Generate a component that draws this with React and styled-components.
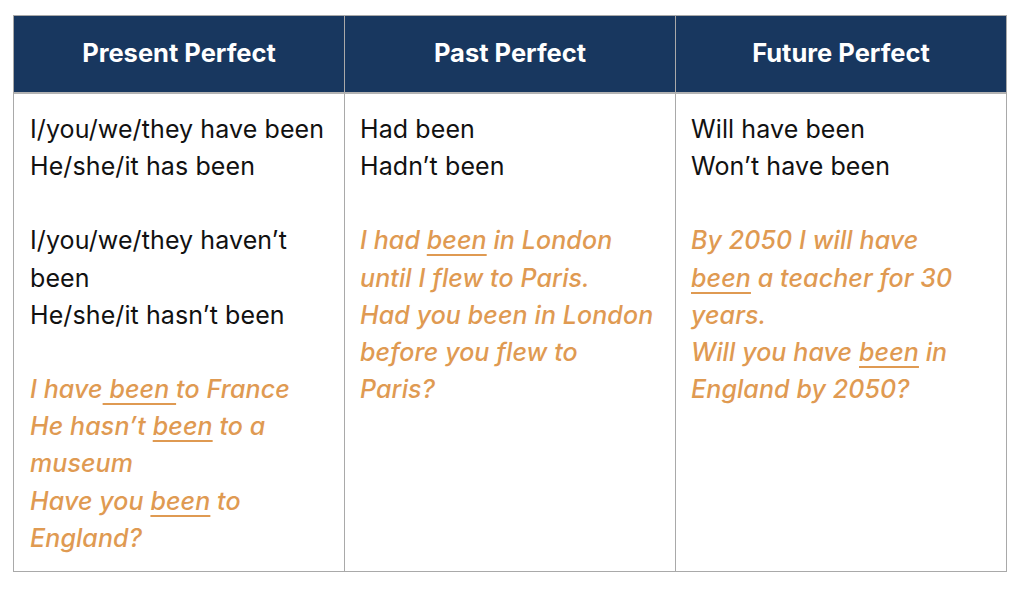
import styled, { createGlobalStyle } from 'styled-components';

const GlobalStyle = createGlobalStyle`
  html, body {
    margin: 0;
    padding: 0;
    background: #ffffff;
  }
  body {
    font-family: Inter, "Noto Sans", sans-serif;
  }
`;

const columns = [
  {
    title: 'Present Perfect',
    blocks: [
      { kind: 'form', lines: [['I/you/we/they have been'], ['He/she/it has been']] },
      { kind: 'form', lines: [['I/you/we/they haven’t'], ['been'], ['He/she/it hasn’t been']] },
      {
        kind: 'example',
        lines: [
          ['I have', { u: ' been ' }, 'to France'],
          ['He hasn’t ', { u: 'been' }, ' to a'],
          ['museum'],
          ['Have you ', { u: 'been' }, ' to'],
          ['England?'],
        ],
      },
    ],
  },
  {
    title: 'Past Perfect',
    blocks: [
      { kind: 'form', lines: [['Had been'], ['Hadn’t been']] },
      {
        kind: 'example',
        lines: [
          ['I had ', { u: 'been' }, ' in London'],
          ['until I flew to Paris.'],
          ['Had you been in London'],
          ['before you flew to'],
          ['Paris?'],
        ],
      },
    ],
  },
  {
    title: 'Future Perfect',
    blocks: [
      { kind: 'form', lines: [['Will have been'], ['Won’t have been']] },
      {
        kind: 'example',
        lines: [
          ['By 2050 I will have'],
          [{ u: 'been' }, ' a teacher for 30'],
          ['years.'],
          ['Will you have ', { u: 'been' }, ' in'],
          ['England by 2050?'],
        ],
      },
    ],
  },
];

export default function App() {
  return (
    <>
      <GlobalStyle />
      <Page>
        <Table>
          {columns.map((col) => (
            <HeadCell key={col.title}>{col.title}</HeadCell>
          ))}
          {columns.map((col) => (
            <BodyCell key={col.title}>
              {col.blocks.map((block, i) => (
                <Block key={i} $example={block.kind === 'example'}>
                  {block.lines.map((line, j) => (
                    <Line key={j}>
                      {line.map((part, k) =>
                        typeof part === 'string' ? (
                          <span key={k}>{part}</span>
                        ) : (
                          <Under key={k}>{part.u}</Under>
                        )
                      )}
                    </Line>
                  ))}
                </Block>
              ))}
            </BodyCell>
          ))}
        </Table>
      </Page>
    </>
  );
}

const Page = styled.div`
  padding: 15px 0 0 13px;
  width: 1024px;
  height: 591px;
  box-sizing: border-box;
`;

const Table = styled.div`
  width: 994px;
  display: grid;
  grid-template-columns: 330px 331px 331px;
  border: 1px solid #a9a9a9;
  box-sizing: border-box;
`;

const HeadCell = styled.div`
  background: #18375f;
  color: #ffffff;
  height: 78px;
  display: flex;
  align-items: center;
  justify-content: center;
  font-weight: 700;
  font-size: 25.5px;
  padding-bottom: 4px;
  box-sizing: border-box;
  border-bottom: 2px solid #b3b3b3;
  border-left: 1px solid #a9a9a9;

  &:first-child {
    border-left: none;
  }
`;

const BodyCell = styled.div`
  padding: 17px 15px 16px 15px;
  height: 477px;
  box-sizing: border-box;
  border-left: 1px solid #a9a9a9;
  display: flex;
  flex-direction: column;
  gap: 37px;

  &:nth-child(4) {
    border-left: none;
    padding-left: 16px;
  }
`;

const Block = styled.div`
  font-size: 25px;
  line-height: 37.2px;
  letter-spacing: ${(p) => (p.$example ? '0.1px' : '0.1px')};
  font-weight: ${(p) => (p.$example ? 500 : 400)};
  color: ${(p) => (p.$example ? '#df9a52' : '#111111')};
  font-style: ${(p) => (p.$example ? 'italic' : 'normal')};
`;

const Line = styled.div`
  white-space: pre;
`;

const Under = styled.span`
  text-decoration: underline;
  text-decoration-thickness: 2px;
  text-underline-offset: 5px;
`;
